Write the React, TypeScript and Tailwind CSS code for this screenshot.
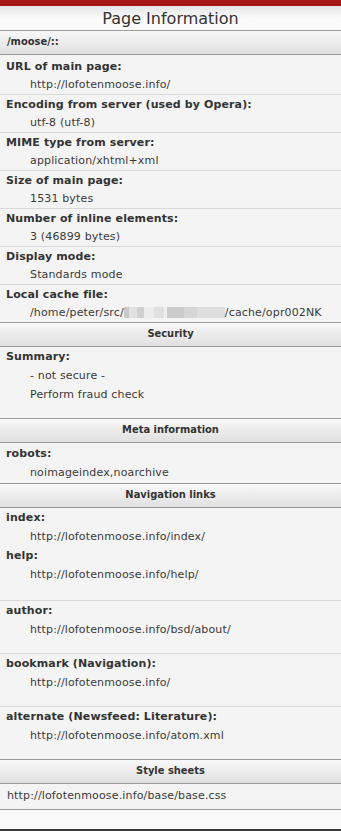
import React from "react";

function Header({ children }: { children: React.ReactNode }) {
  return (
    <div className="h-[25px] border-y border-[#9a9a9a] bg-linear-to-b from-[#f8f8f8] to-[#e0e0e0] flex items-center justify-center text-[11px] font-bold text-[#333] font-['DejaVu_Sans_Condensed','DejaVu_Sans',sans-serif] tracking-[0px]">
      {children}
    </div>
  );
}

function Label({ children }: { children: React.ReactNode }) {
  return <div className="h-[19px] leading-[19px] pl-[6px] font-bold text-[#333] tracking-[0.12px] whitespace-nowrap">{children}</div>;
}

function Value({ children, h18 }: { children: React.ReactNode; h18?: boolean }) {
  return (
    <div
      className={
        h18
          ? "h-[18px] leading-[18px] pl-[30px] text-[#3a3a3a] tracking-[0.15px] whitespace-nowrap"
          : "h-[19px] leading-[19px] pl-[30px] text-[#3a3a3a] tracking-[0.15px] whitespace-nowrap"
      }
    >
      {children}
    </div>
  );
}

function InfoRow({ label, value, first }: { label: string; value: React.ReactNode; first?: boolean }) {
  return (
    <div className={first ? "pt-[2px]" : "border-t border-[#d9d9d9]"}>
      <Label>{label}</Label>
      <Value h18>{value}</Value>
    </div>
  );
}

function Redacted() {
  const cells = [
    "bg-[#c9c9c9] w-[5px]",
    "bg-[#e2e2e2] w-[8px]",
    "bg-[#d0d0d0] w-[7px]",
    "bg-[#ececec] w-[10px]",
    "bg-[#e0e0e0] w-[10px]",
    "bg-[#efefef] w-[3px]",
    "bg-[#cbcbcb] w-[17px]",
    "bg-[#d6d6d6] w-[13px]",
    "bg-[#dedede] w-[28px]",
  ];
  return (
    <span className="inline-flex align-[-2px] h-[11px]">
      {cells.map((c, i) => (
        <span key={i} className={"inline-block h-[11px] " + c} />
      ))}
    </span>
  );
}

function LinkBlock({ label, value }: { label: string; value: string }) {
  return (
    <div className="border-t border-[#d9d9d9] pb-[14px]">
      <Label>{label}</Label>
      <Value>{value}</Value>
    </div>
  );
}

export default function App() {
  return (
    <div className="w-[341px] h-[831px] bg-[#f4f4f4] text-[11px] font-['DejaVu_Sans',sans-serif] overflow-hidden flex flex-col">
      <div className="h-[6px] shrink-0 bg-[#a81717]" />
      <div className="h-[24px] shrink-0 bg-linear-to-b from-[#e4e4e4] via-[#fafafa] to-[#fafafa] flex items-center justify-center text-[16px] leading-[16px] text-[#333] pt-[1px]">
        Page Information
      </div>
      <div className="h-[25px] shrink-0 border-y border-[#9a9a9a] bg-linear-to-b from-[#f8f8f8] to-[#e0e0e0] flex items-center pl-[7px] text-[11px] font-bold text-[#333] font-['DejaVu_Sans_Condensed','DejaVu_Sans',sans-serif]">
        /moose/::
      </div>
      <InfoRow first label="URL of main page:" value="http://lofotenmoose.info/" />
      <InfoRow label="Encoding from server (used by Opera):" value="utf-8 (utf-8)" />
      <InfoRow label="MIME type from server:" value="application/xhtml+xml" />
      <InfoRow label="Size of main page:" value="1531 bytes" />
      <InfoRow label="Number of inline elements:" value="3 (46899 bytes)" />
      <InfoRow label="Display mode:" value="Standards mode" />
      <InfoRow
        label="Local cache file:"
        value={
          <span>
            /home/peter/src/
            <Redacted />
            /cache/opr002NK
          </span>
        }
      />
      <Header>Security</Header>
      <div className="pb-[14px]">
        <Label>Summary:</Label>
        <Value>- not secure -</Value>
        <Value>Perform fraud check</Value>
      </div>
      <Header>Meta information</Header>
      <div className="h-[40px] pt-[1px]">
        <Label>robots:</Label>
        <Value>noimageindex,noarchive</Value>
      </div>
      <Header>Navigation links</Header>
      <div className="pb-[16px]">
        <Label>index:</Label>
        <Value>http://lofotenmoose.info/index/</Value>
        <Label>help:</Label>
        <Value>http://lofotenmoose.info/help/</Value>
      </div>
      <LinkBlock label="author:" value="http://lofotenmoose.info/bsd/about/" />
      <LinkBlock label="bookmark (Navigation):" value="http://lofotenmoose.info/" />
      <LinkBlock label="alternate (Newsfeed: Literature):" value="http://lofotenmoose.info/atom.xml" />
      <Header>Style sheets</Header>
      <div className="h-[26px] shrink-0 leading-[24px] pl-[7px] text-[#3a3a3a] tracking-[0.15px] border-b border-[#9a9a9a]">
        http://lofotenmoose.info/base/base.css
      </div>
      <div className="flex-1 bg-[#f9f9f9]" />
      <div className="h-[2px] shrink-0 bg-[#3c3c3c]" />
    </div>
  );
}
